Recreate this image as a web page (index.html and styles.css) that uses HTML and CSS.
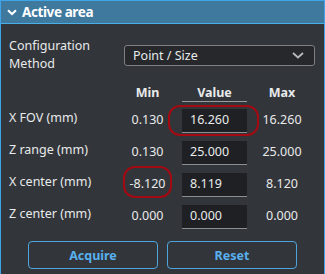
FILE: index.html
```html
<!DOCTYPE html>
<html>
<head>
<meta charset="utf-8">
<link rel="stylesheet" href="styles.css">
</head>
<body>
<div class="panel">
  <div class="header">
    <svg class="chev" width="10" height="7" viewBox="0 0 10 7"><path d="M1 1.2 L5 5 L9 1.2" fill="none" stroke="#ffffff" stroke-width="2"/></svg>
    <span class="title">Active area</span>
  </div>
  <div class="content">
    <div class="config">
      <div class="config-label">Configuration<br>Method</div>
      <div class="select">
        <span>Point / Size</span>
        <svg width="12" height="7" viewBox="0 0 12 7"><path d="M1 1 L6 5.5 L11 1" fill="none" stroke="#b8b9bb" stroke-width="1.8"/></svg>
      </div>
    </div>
    <div class="grid">
      <div></div>
      <div class="colhead">Min</div>
      <div class="colhead value-head">Value</div>
      <div class="colhead">Max</div>

      <div class="label">X FOV (mm)</div>
      <div class="num">0.130</div>
      <div class="cell ring-input"><div class="input">16.260</div></div>
      <div class="num">16.260</div>

      <div class="label">Z range (mm)</div>
      <div class="num">0.130</div>
      <div class="cell"><div class="input">25.000</div></div>
      <div class="num">25.000</div>

      <div class="label">X center (mm)</div>
      <div class="num ring-min">-8.120</div>
      <div class="cell"><div class="input">8.119</div></div>
      <div class="num">8.120</div>

      <div class="label">Z center (mm)</div>
      <div class="num">0.000</div>
      <div class="cell"><div class="input">0.000</div></div>
      <div class="num">0.000</div>
    </div>
    <div class="buttons">
      <button class="btn">Acquire</button>
      <button class="btn">Reset</button>
    </div>
  </div>
</div>
</body>
</html>
```
FILE: styles.css
```css
* { box-sizing: border-box; }
html, body { margin: 0; padding: 0; background: #32353a; }
body { font-family: "Noto Sans", sans-serif; color: #e9eaeb; }
.panel {
  width: 325px;
  height: 274px;
  border: 1px solid #3fa5e8;
  border-bottom: none;
  background: #32353a;
}
.header {
  height: 23px;
  background: #40799e;
  border-bottom: 1px solid #4aaee8;
  display: flex;
  align-items: center;
  padding-left: 6px;
}
.chev { margin-right: 5px; margin-top: 1px; }
.title { font-weight: bold; font-size: 13.5px; color: #ffffff; letter-spacing: -0.4px; }
.content { padding: 12px 0 0 8px; }
.config { display: flex; align-items: flex-start; }
.config-label { width: 115px; font-size: 12.5px; line-height: 18px; margin-top: 1px; }
.select {
  width: 191px;
  height: 21px;
  margin-top: 9px;
  border: 1px solid #7d7f83;
  border-radius: 3px;
  background: #26282c;
  display: flex;
  align-items: center;
  justify-content: space-between;
  padding: 0 10px 0 8px;
  font-size: 12.5px;
}
.grid {
  display: grid;
  grid-template-columns: 104px 49px 65px 50px;
  column-gap: 10px;
  grid-template-rows: 18px repeat(4, 32px);
  margin-top: 11px;
  font-size: 12.5px;
}
.colhead { font-weight: bold; text-align: center; line-height: 17px; }
.value-head { border-bottom: 1px solid #9a9b9d; }
.label { padding-top: 7px; line-height: 18px; }
.num { text-align: center; padding-top: 9px; line-height: 18px; }
.cell { position: relative; padding-top: 7px; }
.input {
  height: 24px;
  background: #1f2023;
  border-bottom: 1px solid #8d8e90;
  padding-left: 8px;
  line-height: 22px;
}
.ring-input::after {
  content: "";
  position: absolute;
  left: -14px; right: -12px; top: 3px; bottom: -2px;
  border: 2px solid #a30a12;
  border-radius: 12px;
}
.ring-min { border: 2px solid #a30a12; border-radius: 12px; padding-top: 7px; }
.buttons { display: flex; justify-content: center; gap: 9px; margin: 11px 0 0 -8px; }
.btn {
  width: 130px;
  height: 28px;
  border: 1px solid #4ea6dc;
  border-radius: 4px;
  background: transparent;
  color: #58b0ee;
  font-family: "Noto Sans", sans-serif;
  font-weight: bold;
  font-size: 12.5px;
}
```
